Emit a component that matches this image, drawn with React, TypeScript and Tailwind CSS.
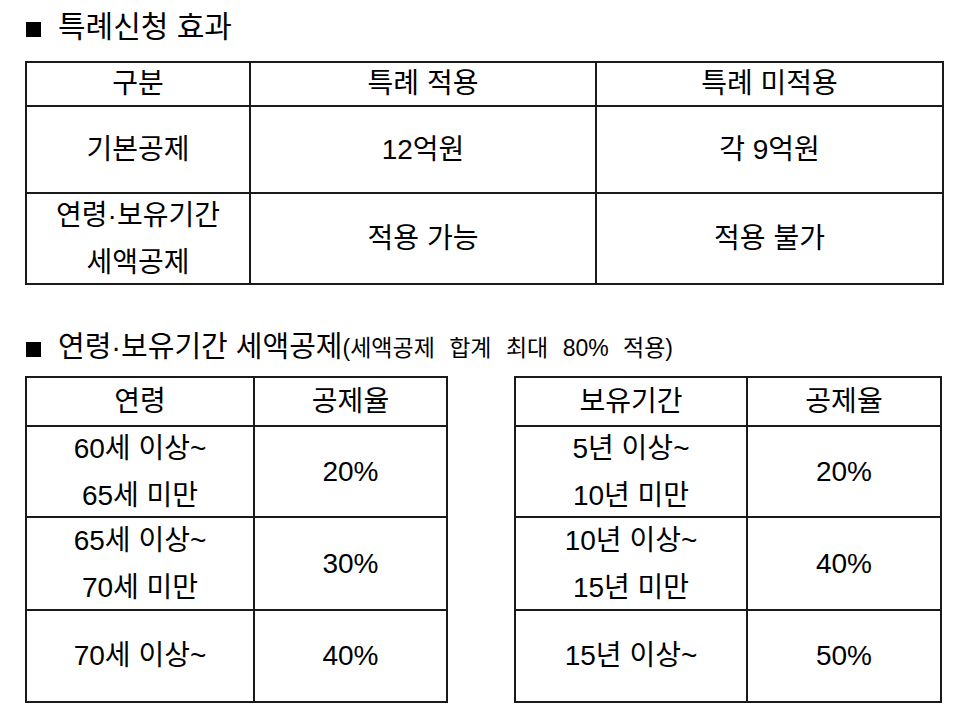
const font = { fontFamily: '"Liberation Sans", "Noto Sans CJK KR", sans-serif' }

const bodyCell = 'border-2 border-[#1a1a1a] text-center align-middle p-0 text-[28px] leading-[44px] text-black'

const ageRows = [
  { label: ['60세 이상~', '65세 미만'], rate: '20%', h: 'h-[91px]' },
  { label: ['65세 이상~', '70세 미만'], rate: '30%', h: 'h-[93px]' },
  { label: ['70세 이상~'], rate: '40%', h: 'h-[92px]' },
]

const holdRows = [
  { label: ['5년 이상~', '10년 미만'], rate: '20%', h: 'h-[91px]' },
  { label: ['10년 이상~', '15년 미만'], rate: '40%', h: 'h-[93px]' },
  { label: ['15년 이상~'], rate: '50%', h: 'h-[92px]' },
]

function Bullet() {
  return <span className="inline-block w-[15px] h-[15px] bg-black mr-[17px] mt-[4px] shrink-0" />
}

// two stacked lines, spaced wider than the row would allow
function TwoLines({ lines }: { lines: string[] }) {
  if (lines.length === 1) return <div>{lines[0]}</div>
  return (
    <div className="-my-[4px] leading-[47px]">
      {lines.map((l, j) => (
        <div key={j}>{l}</div>
      ))}
    </div>
  )
}

function Head({ children }: { children: React.ReactNode }) {
  return <div className="h-[36px] flex items-center justify-center leading-none">{children}</div>
}

function RateTable({
  head,
  rows,
  w,
  w1,
  w2,
}: {
  head: string
  rows: { label: string[]; rate: string; h: string }[]
  w: string
  w1: string
  w2: string
}) {
  return (
    <table className={'border-collapse table-fixed ' + w}>
      <colgroup>
        <col className={w1} />
        <col className={w2} />
      </colgroup>
      <tbody>
        <tr className="h-[49px]">
          <td className={bodyCell}><Head>{head}</Head></td>
          <td className={bodyCell}><Head>공제율</Head></td>
        </tr>
        {rows.map((r, i) => (
          <tr key={i} className={r.h}>
            <td className={bodyCell}>
              <TwoLines lines={r.label} />
            </td>
            <td className={bodyCell}>{r.rate}</td>
          </tr>
        ))}
      </tbody>
    </table>
  )
}

export default function App() {
  return (
    <div className="w-[960px] h-[724px] bg-white px-[25px] text-black overflow-hidden" style={font}>
      {/* 특례신청 효과 */}
      <div className="h-[54px] mb-[7px] flex items-center pl-[1px]">
        <Bullet />
        <span className="text-[30px] leading-none">특례신청 효과</span>
      </div>

      <table className="border-collapse table-fixed w-[917px]">
        <colgroup>
          <col className="w-[224px]" />
          <col className="w-[346px]" />
          <col className="w-[347px]" />
        </colgroup>
        <tbody>
          <tr className="h-[44px]">
            <td className={bodyCell}><Head>구분</Head></td>
            <td className={bodyCell}><Head>특례 적용</Head></td>
            <td className={bodyCell}><Head>특례 미적용</Head></td>
          </tr>
          <tr className="h-[87px]">
            <td className={bodyCell}>기본공제</td>
            <td className={bodyCell}>12억원</td>
            <td className={bodyCell}>각 9억원</td>
          </tr>
          <tr className="h-[91px]">
            <td className={bodyCell}>
              <TwoLines lines={['연령·보유기간', '세액공제']} />
            </td>
            <td className={bodyCell}>적용 가능</td>
            <td className={bodyCell}>적용 불가</td>
          </tr>
        </tbody>
      </table>

      {/* 연령·보유기간 세액공제 */}
      <div className="h-[54px] mt-[35px] mb-[2px] flex items-center pl-[1px]">
        <Bullet />
        <span className="text-[29px] leading-none">연령·보유기간 세액공제</span>
        <span className="text-[23px] leading-none mt-[3px] [word-spacing:8px]">(세액공제 합계 최대 80% 적용)</span>
      </div>

      <div className="flex gap-[66px]">
        <RateTable head="연령" rows={ageRows} w="w-[421px]" w1="w-[228px]" w2="w-[193px]" />
        <RateTable head="보유기간" rows={holdRows} w="w-[426px]" w1="w-[232px]" w2="w-[194px]" />
      </div>
    </div>
  )
}
